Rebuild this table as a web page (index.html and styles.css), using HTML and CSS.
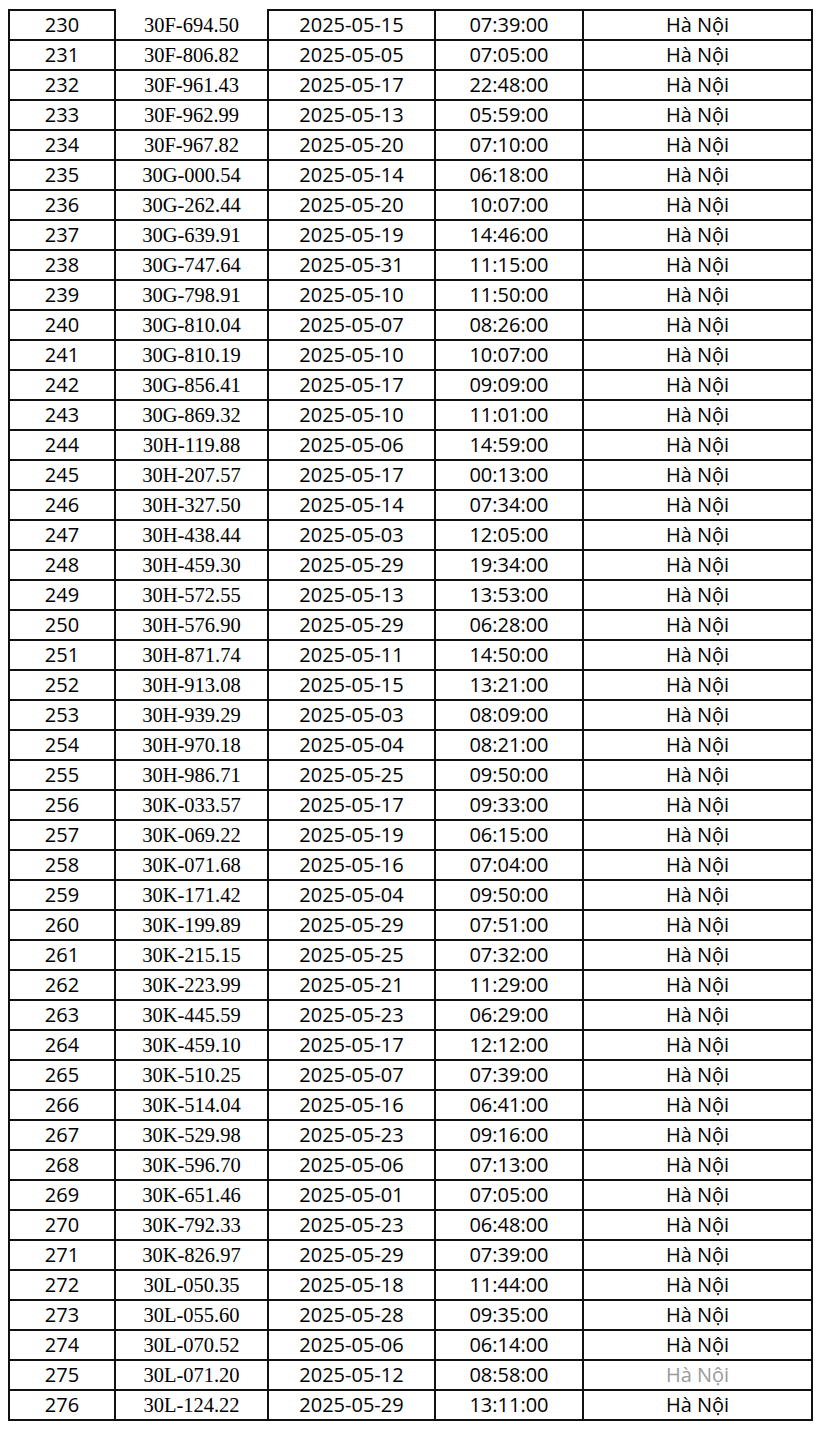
FILE: index.html
```html
<!DOCTYPE html>
<html lang="vi">
<head>
<meta charset="utf-8">
<title>Danh sách</title>
<link rel="stylesheet" href="styles.css">
</head>
<body>
<table class="list">
<colgroup>
<col class="c-no"><col class="c-plate"><col class="c-date"><col class="c-time"><col class="c-place">
</colgroup>
<tbody id="rows">
<tr><td>230</td><td class="plate">30F-694.50</td><td>2025-05-15</td><td>07:39:00</td><td>Hà Nội</td></tr>
<tr><td>231</td><td class="plate">30F-806.82</td><td>2025-05-05</td><td>07:05:00</td><td>Hà Nội</td></tr>
<tr><td>232</td><td class="plate">30F-961.43</td><td>2025-05-17</td><td>22:48:00</td><td>Hà Nội</td></tr>
<tr><td>233</td><td class="plate">30F-962.99</td><td>2025-05-13</td><td>05:59:00</td><td>Hà Nội</td></tr>
<tr><td>234</td><td class="plate">30F-967.82</td><td>2025-05-20</td><td>07:10:00</td><td>Hà Nội</td></tr>
<tr><td>235</td><td class="plate">30G-000.54</td><td>2025-05-14</td><td>06:18:00</td><td>Hà Nội</td></tr>
<tr><td>236</td><td class="plate">30G-262.44</td><td>2025-05-20</td><td>10:07:00</td><td>Hà Nội</td></tr>
<tr><td>237</td><td class="plate">30G-639.91</td><td>2025-05-19</td><td>14:46:00</td><td>Hà Nội</td></tr>
<tr><td>238</td><td class="plate">30G-747.64</td><td>2025-05-31</td><td>11:15:00</td><td>Hà Nội</td></tr>
<tr><td>239</td><td class="plate">30G-798.91</td><td>2025-05-10</td><td>11:50:00</td><td>Hà Nội</td></tr>
<tr><td>240</td><td class="plate">30G-810.04</td><td>2025-05-07</td><td>08:26:00</td><td>Hà Nội</td></tr>
<tr><td>241</td><td class="plate">30G-810.19</td><td>2025-05-10</td><td>10:07:00</td><td>Hà Nội</td></tr>
<tr><td>242</td><td class="plate">30G-856.41</td><td>2025-05-17</td><td>09:09:00</td><td>Hà Nội</td></tr>
<tr><td>243</td><td class="plate">30G-869.32</td><td>2025-05-10</td><td>11:01:00</td><td>Hà Nội</td></tr>
<tr><td>244</td><td class="plate">30H-119.88</td><td>2025-05-06</td><td>14:59:00</td><td>Hà Nội</td></tr>
<tr><td>245</td><td class="plate">30H-207.57</td><td>2025-05-17</td><td>00:13:00</td><td>Hà Nội</td></tr>
<tr><td>246</td><td class="plate">30H-327.50</td><td>2025-05-14</td><td>07:34:00</td><td>Hà Nội</td></tr>
<tr><td>247</td><td class="plate">30H-438.44</td><td>2025-05-03</td><td>12:05:00</td><td>Hà Nội</td></tr>
<tr><td>248</td><td class="plate">30H-459.30</td><td>2025-05-29</td><td>19:34:00</td><td>Hà Nội</td></tr>
<tr><td>249</td><td class="plate">30H-572.55</td><td>2025-05-13</td><td>13:53:00</td><td>Hà Nội</td></tr>
<tr><td>250</td><td class="plate">30H-576.90</td><td>2025-05-29</td><td>06:28:00</td><td>Hà Nội</td></tr>
<tr><td>251</td><td class="plate">30H-871.74</td><td>2025-05-11</td><td>14:50:00</td><td>Hà Nội</td></tr>
<tr><td>252</td><td class="plate">30H-913.08</td><td>2025-05-15</td><td>13:21:00</td><td>Hà Nội</td></tr>
<tr><td>253</td><td class="plate">30H-939.29</td><td>2025-05-03</td><td>08:09:00</td><td>Hà Nội</td></tr>
<tr><td>254</td><td class="plate">30H-970.18</td><td>2025-05-04</td><td>08:21:00</td><td>Hà Nội</td></tr>
<tr><td>255</td><td class="plate">30H-986.71</td><td>2025-05-25</td><td>09:50:00</td><td>Hà Nội</td></tr>
<tr><td>256</td><td class="plate">30K-033.57</td><td>2025-05-17</td><td>09:33:00</td><td>Hà Nội</td></tr>
<tr><td>257</td><td class="plate">30K-069.22</td><td>2025-05-19</td><td>06:15:00</td><td>Hà Nội</td></tr>
<tr><td>258</td><td class="plate">30K-071.68</td><td>2025-05-16</td><td>07:04:00</td><td>Hà Nội</td></tr>
<tr><td>259</td><td class="plate">30K-171.42</td><td>2025-05-04</td><td>09:50:00</td><td>Hà Nội</td></tr>
<tr><td>260</td><td class="plate">30K-199.89</td><td>2025-05-29</td><td>07:51:00</td><td>Hà Nội</td></tr>
<tr><td>261</td><td class="plate">30K-215.15</td><td>2025-05-25</td><td>07:32:00</td><td>Hà Nội</td></tr>
<tr><td>262</td><td class="plate">30K-223.99</td><td>2025-05-21</td><td>11:29:00</td><td>Hà Nội</td></tr>
<tr><td>263</td><td class="plate">30K-445.59</td><td>2025-05-23</td><td>06:29:00</td><td>Hà Nội</td></tr>
<tr><td>264</td><td class="plate">30K-459.10</td><td>2025-05-17</td><td>12:12:00</td><td>Hà Nội</td></tr>
<tr><td>265</td><td class="plate">30K-510.25</td><td>2025-05-07</td><td>07:39:00</td><td>Hà Nội</td></tr>
<tr><td>266</td><td class="plate">30K-514.04</td><td>2025-05-16</td><td>06:41:00</td><td>Hà Nội</td></tr>
<tr><td>267</td><td class="plate">30K-529.98</td><td>2025-05-23</td><td>09:16:00</td><td>Hà Nội</td></tr>
<tr><td>268</td><td class="plate">30K-596.70</td><td>2025-05-06</td><td>07:13:00</td><td>Hà Nội</td></tr>
<tr><td>269</td><td class="plate">30K-651.46</td><td>2025-05-01</td><td>07:05:00</td><td>Hà Nội</td></tr>
<tr><td>270</td><td class="plate">30K-792.33</td><td>2025-05-23</td><td>06:48:00</td><td>Hà Nội</td></tr>
<tr><td>271</td><td class="plate">30K-826.97</td><td>2025-05-29</td><td>07:39:00</td><td>Hà Nội</td></tr>
<tr><td>272</td><td class="plate">30L-050.35</td><td>2025-05-18</td><td>11:44:00</td><td>Hà Nội</td></tr>
<tr><td>273</td><td class="plate">30L-055.60</td><td>2025-05-28</td><td>09:35:00</td><td>Hà Nội</td></tr>
<tr><td>274</td><td class="plate">30L-070.52</td><td>2025-05-06</td><td>06:14:00</td><td>Hà Nội</td></tr>
<tr><td>275</td><td class="plate">30L-071.20</td><td>2025-05-12</td><td>08:58:00</td><td class="faded">Hà Nội</td></tr>
<tr><td>276</td><td class="plate">30L-124.22</td><td>2025-05-29</td><td>13:11:00</td><td>Hà Nội</td></tr>
</tbody>
</table>
</body>
</html>
```

FILE: styles.css
```css
html, body {
  margin: 0;
  padding: 0;
  background: #fff;
}

body {
  font-family: "Open Sans", "DejaVu Sans", sans-serif;
  color: #000;
}

.list {
  border-collapse: collapse;
  table-layout: fixed;
  width: 803px;
  margin: 9px 0 0 8px;
}

.c-no { width: 106px; }
.c-plate { width: 153px; }
.c-date { width: 167px; }
.c-time { width: 148px; }
.c-place { width: 229px; }

.list td {
  border: 2px solid #111;
  height: 28px;
  padding: 0;
  text-align: center;
  vertical-align: middle;
  font-size: 20px;
  line-height: 28px;
  white-space: nowrap;
}

.list tr:first-child td:nth-child(2) {
  border-top: none;
}

.list td.plate {
  font-family: "Liberation Serif", "Times New Roman", serif;
  font-size: 20.5px;
}

.list td.faded {
  color: #9a9a9a;
}
```
